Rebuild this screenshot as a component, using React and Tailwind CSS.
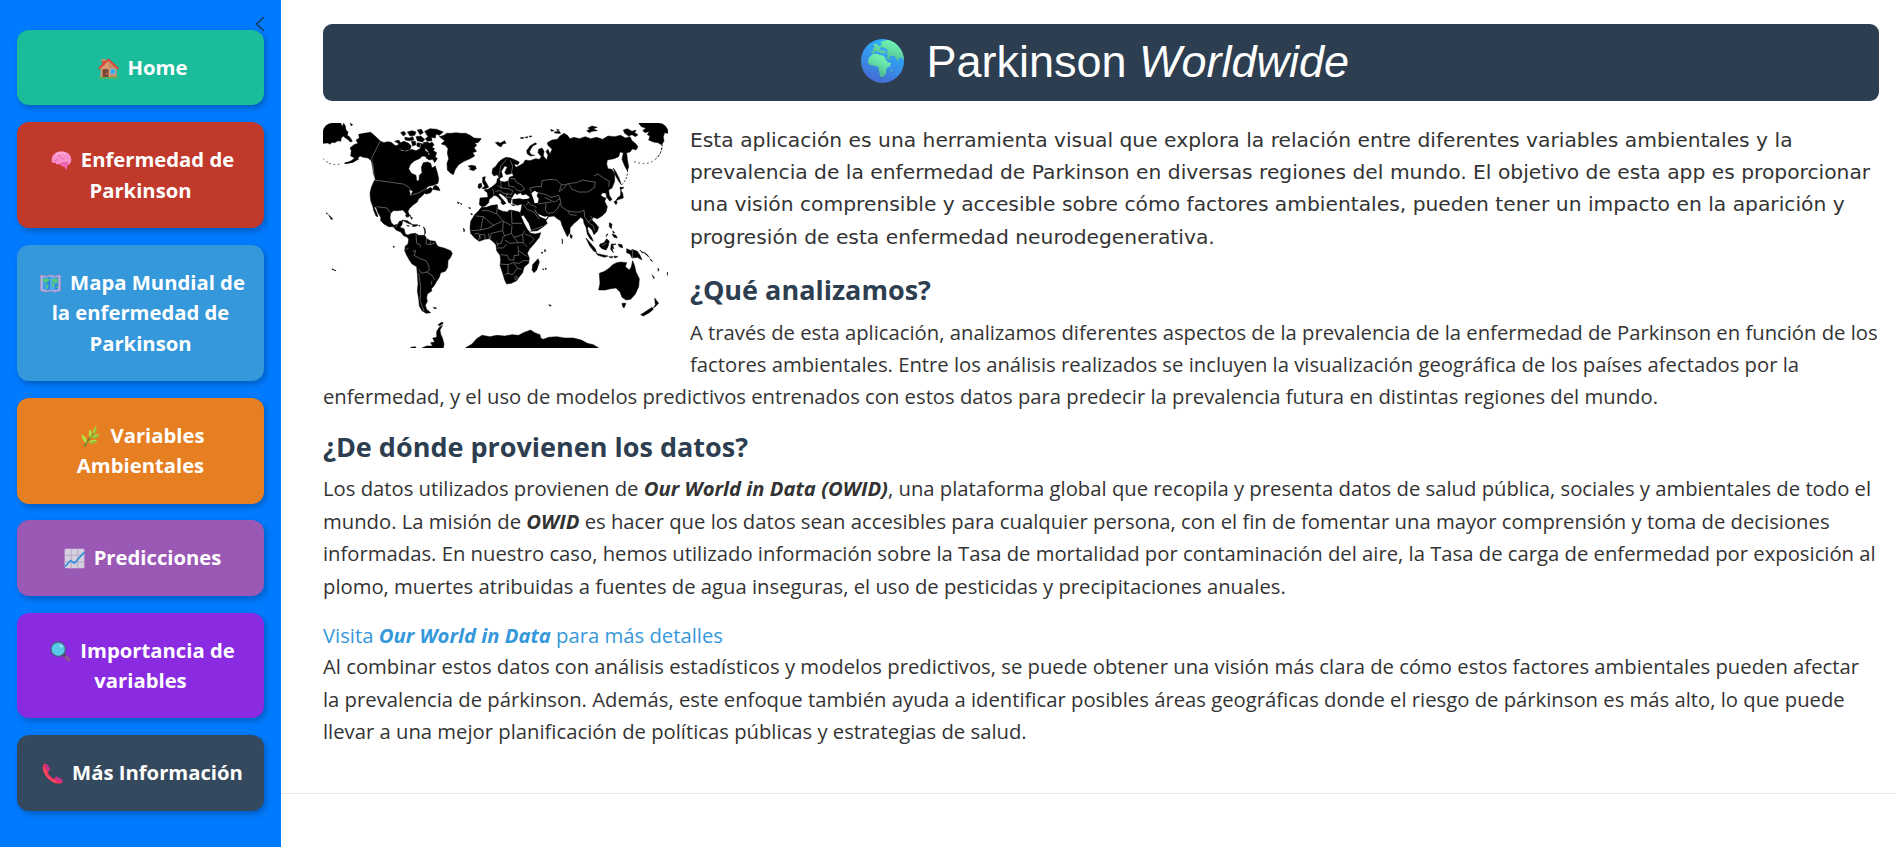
const LAND = [
  // Chukotka, left edge
  "M39 39 L92 39 L97 50 L101 40 L106 48 L108 60 L114 66 L112 76 L120 82 L127 94 L121 96 L113 88 L106 84 L100 78 L94 84 L92 94 L84 92 L74 98 L66 97 L60 103 L54 99 L39 100 Z",
  // Alaska and Canada
  "M146 73 L162 70 L182 67 L196 79 L211 93 L222 98 L232 95 L244 97 L252 104 L262 110 L274 122 L290 124 L304 118 L318 122 L330 116 L334 100 L342 104 L346 122 L356 128 L350 140 L338 138 L328 146 L314 152 L302 162 L296 176 L304 190 L318 196 L320 212 L327 212 L328 196 L336 188 L334 172 L340 158 L352 156 L362 160 L366 174 L376 168 L382 188 L386 206 L384 220 L370 226 L358 228 L348 234 L352 238 L362 232 L368 238 L362 248 L350 252 L344 250 L334 260 L326 266 L322 276 L308 286 L298 296 L294 304 L299 318 L293 322 L286 308 L278 300 L262 302 L250 302 L242 310 L240 324 L244 338 L252 346 L264 342 L268 334 L278 332 L276 344 L270 352 L282 356 L286 372 L296 376 L310 374 L318 378 L306 378 L294 382 L282 378 L272 366 L258 360 L250 350 L236 350 L222 342 L212 332 L212 322 L204 308 L198 292 L192 290 L200 308 L204 320 L198 318 L192 304 L188 288 L182 272 L180 250 L184 232 L192 214 L196 208 L190 190 L188 172 L184 152 L174 144 L160 142 L150 138 L140 148 L132 156 L120 158 L104 160 L124 152 L134 144 L122 138 L124 122 L120 114 L132 104 L144 100 L138 90 L148 84 Z",
  // Arctic archipelago
  "M254 94 L266 90 L272 98 L282 94 L296 100 L304 108 L300 118 L286 122 L270 118 L258 108 L268 102 Z",
  "M272 68 L282 64 L288 72 L280 78 Z M292 66 L306 62 L318 66 L314 76 L300 78 Z M322 60 L334 58 L340 68 L330 74 Z M344 64 L360 56 L380 58 L400 66 L388 76 L378 72 L376 84 L364 82 L366 92 L352 94 L346 86 L354 80 Z M284 82 L298 84 L308 80 L312 90 L298 92 L286 90 Z M318 80 L332 78 L344 88 L338 96 L322 92 Z M340 98 L350 96 L360 100 L366 96 L372 104 L366 112 L374 116 L370 122 L380 128 L376 140 L382 146 L374 158 L368 148 L358 150 L348 144 L352 134 L360 134 L354 122 L342 112 Z M304 94 L316 94 L318 104 L308 108 Z M322 98 L332 100 L328 112 L320 108 Z",
  "M378 226 L386 232 L390 242 L380 240 L368 238 L372 228 Z",
  // Greenland and Iceland
  "M388 80 L402 76 L410 70 L424 70 L438 68 L452 70 L468 70 L480 76 L492 84 L514 86 L504 98 L494 98 L500 106 L492 114 L500 124 L488 128 L494 138 L480 146 L462 154 L446 164 L436 178 L430 194 L422 190 L412 180 L411 160 L416 146 L412 130 L414 116 L406 106 L394 102 L404 92 Z",
  "M474 168 L484 166 L496 168 L499 176 L490 182 L478 178 L482 174 Z",
  // South America
  "M290 378 L300 372 L316 370 L326 376 L344 376 L350 386 L362 392 L376 394 L380 404 L386 410 L402 414 L422 422 L427 430 L422 442 L414 452 L413 472 L406 484 L392 488 L388 502 L380 514 L372 528 L364 536 L366 542 L352 552 L350 564 L352 574 L346 586 L350 598 L362 608 L348 610 L336 602 L328 588 L326 566 L322 544 L324 520 L322 492 L320 470 L306 462 L298 450 L290 436 L284 422 L286 408 L294 402 L296 388 Z",
  // British Isles
  "M518 202 L526 200 L524 210 L530 220 L536 232 L526 236 L516 236 L524 228 L518 218 Z M506 222 L514 220 L516 230 L508 236 L504 232 Z",
  // Europe and Asia
  "M546 190 L548 176 L558 168 L566 156 L576 148 L588 142 L602 144 L616 150 L628 156 L624 164 L612 162 L618 172 L630 166 L640 160 L646 150 L660 152 L676 146 L688 148 L694 140 L684 128 L686 118 L696 114 L702 124 L700 138 L710 150 L714 136 L708 124 L714 118 L720 132 L726 118 L714 106 L712 98 L726 90 L742 88 L750 78 L762 70 L772 76 L780 86 L792 82 L808 86 L826 80 L842 86 L860 82 L878 88 L894 78 L914 80 L932 76 L946 84 L960 80 L966 92 L976 100 L984 110 L978 120 L968 116 L960 126 L950 128 L952 148 L956 170 L952 182 L944 168 L936 148 L940 128 L930 126 L926 140 L912 146 L892 150 L890 162 L894 176 L906 178 L914 192 L914 214 L906 234 L896 240 L898 256 L906 268 L900 274 L890 262 L888 250 L878 248 L872 256 L880 262 L888 264 L884 274 L892 290 L888 306 L876 318 L862 326 L850 322 L846 330 L856 340 L866 352 L862 364 L852 374 L846 360 L836 350 L832 354 L836 368 L846 384 L850 394 L840 386 L832 372 L828 352 L822 340 L820 328 L812 322 L804 330 L790 342 L780 354 L780 368 L772 380 L764 364 L756 346 L752 332 L742 326 L732 318 L716 320 L708 332 L712 340 L700 350 L682 362 L662 364 L652 344 L638 324 L630 310 L634 296 L636 282 L622 286 L608 280 L608 268 L626 266 L640 266 L656 266 L660 262 L648 252 L636 256 L632 248 L620 254 L616 248 L610 256 L604 266 L602 280 L596 278 L592 268 L582 258 L570 250 L566 254 L580 270 L588 280 L580 284 L572 270 L560 258 L552 256 L544 264 L538 266 L536 278 L526 288 L516 290 L508 284 L510 264 L534 262 L532 248 L522 240 L534 238 L544 232 L552 226 L560 218 L562 206 L568 204 L570 214 L584 216 L596 212 L598 202 L610 198 L608 190 L590 194 L584 188 L592 170 L584 168 L574 184 L578 200 L568 206 L562 194 L552 198 Z",
  // Africa
  "M514 292 L528 292 L546 286 L562 284 L564 298 L578 304 L592 306 L598 300 L612 302 L628 306 L634 320 L642 340 L652 358 L662 370 L676 372 L692 368 L688 382 L672 402 L658 418 L652 430 L658 444 L656 460 L642 472 L638 488 L628 500 L620 512 L604 520 L590 522 L584 510 L578 490 L570 466 L572 450 L570 436 L560 422 L558 404 L548 394 L538 386 L524 388 L508 394 L494 384 L482 370 L480 352 L482 334 L494 314 L506 302 Z",
  "M684 446 L688 456 L680 480 L672 488 L666 480 L668 464 Z",
  // Novaya Zemlya, Svalbard
  "M676 98 L680 102 L668 108 L662 118 L658 126 L664 134 L674 136 L662 138 L652 132 L650 122 L660 108 Z M556 98 L564 96 L570 100 L584 92 L588 100 L578 102 L574 110 L566 108 Z",
  "M630 84 L640 82 L640 86 Z M644 82 L654 80 L652 84 Z M658 78 L666 78 L660 82 Z M722 58 L732 62 L724 64 Z M732 66 L748 64 L752 70 L738 70 Z M740 58 L748 60 L742 62 Z M834 54 L846 48 L862 52 L850 56 L862 62 L846 64 L838 68 L830 62 L840 58 Z",
  // Kamchatka, Chukotka, right edge
  "M986 39 L1074 39 L1074 70 L1064 68 L1060 80 L1062 94 L1054 104 L1044 98 L1030 96 L1016 90 L1020 78 L1012 74 L1018 64 L1006 68 L998 62 L1008 54 L994 50 Z M940 60 L952 56 L966 64 L978 60 L974 68 L984 74 L976 80 L966 74 L956 78 L944 70 Z",
  // Japan, Sakhalin
  "M910 174 L918 186 L928 206 L934 224 L926 214 L916 196 Z M930 232 L942 232 L936 238 L930 238 Z M932 240 L938 250 L940 264 L928 268 L918 272 L922 264 L932 256 Z M916 272 L922 276 L918 284 L912 276 Z",
  // South-east Asia
  "M828 384 L842 400 L856 416 L860 428 L850 422 L838 406 Z M858 430 L876 434 L894 438 L884 442 L864 436 Z M870 402 L882 398 L890 386 L898 394 L894 410 L888 420 L876 416 L868 408 Z M904 402 L918 402 L908 406 L912 416 L906 414 L910 428 L902 418 Z M898 338 L906 342 L904 356 L898 350 Z M906 372 L918 376 L922 384 L912 382 Z M950 416 L964 422 L966 418 L982 424 L990 436 L996 450 L982 442 L966 444 L960 432 L950 428 Z M782 372 L787 378 L784 386 L780 380 Z M924 402 L936 404 L938 414 L928 410 Z M896 440 L910 440 L904 444 Z M912 438 L924 440 L914 444 Z",
  // Australia, New Zealand
  "M866 540 L870 520 L868 490 L884 484 L898 474 L908 464 L920 458 L932 456 L950 458 L946 470 L958 480 L964 470 L968 452 L974 468 L978 486 L988 506 L986 530 L976 552 L962 568 L948 570 L936 562 L930 546 L918 534 L902 536 L886 540 Z M936 580 L948 580 L942 594 L938 590 Z M1034 564 L1040 572 L1046 580 L1038 588 L1030 594 L1036 584 Z M1026 592 L1030 598 L1018 608 L1000 618 L992 614 L1008 604 Z",
  // Antarctica
  "M466 714 L486 702 L500 686 L516 676 L540 680 L560 676 L584 678 L606 674 L626 676 L640 668 L662 660 L674 668 L690 674 L692 684 L700 688 L716 682 L740 680 L764 684 L790 684 L814 690 L832 700 L850 704 L866 714 Z",
  "M336 714 L350 708 L368 708 L362 698 L374 696 L368 684 L380 682 L380 664 L388 652 L398 646 L390 660 L392 672 L398 686 L402 702 L400 714 Z M302 712 L316 710 L318 714 L304 714 Z M384 644 L396 636 L400 640 L388 648 Z",
  // Small islands
  "M48 308 l5 3 l-2 2z M56 314 l6 6 l-3 1z M62 320 l6 6 l-2 3 l-5 -4z M66 476 l6 3 l-4 1z M72 480 l6 1 l-2 2z M250 408 l4 2 l-3 3z M276 330 L292 332 L308 344 L294 340 Z M308 344 L324 344 L320 348 L308 350 Z M286 316 l6 0 l-2 6z M300 314 l3 8 l5 2 l-4 4z M290 346 l8 2 l-4 1z M326 346 l5 1 l-4 2z M340 350 l5 6 l2 12 l-3 6 l0 -12z M370 592 l10 2 l-6 3z M442 276 l6 2 l-4 3z M450 280 l6 2 l-3 1z M476 292 l6 2 l-3 3z M482 310 l6 3 l-3 2z M460 354 l4 6 l-2 6z M704 418 l4 4 l-4 4z M694 426 l5 2 l-3 3z M706 474 l4 2 l-4 3z M698 476 l4 2 l-3 2z M756 386 l2 6 l-1 10z M716 584 l8 2 l-4 3z M120 40 l8 4 l-4 4z M572 276 l10 2 l-4 6z M604 284 l12 1 l-6 2z M990 420 l10 8 l-3 1z M1000 426 l10 6 l8 10 l-9 -7z M1020 446 l8 8 l-4 -1z M1044 474 l3 6 l-3 4z M1072 486 l2 8 l-2 2z M1026 494 l8 10 l-3 1z M908 362 l6 6 l-4 2z M894 372 l-6 8 l3 -8z",
];

const BORDERS =
  "M211 93 L184 146 L188 152 M188 156 L194 210 L280 222 L296 232 L304 242 L300 256 L328 248 L344 238 L354 236 M200 290 L232 294 L240 308 M256 352 L262 344 M272 352 L280 356 M318 374 L320 400 L330 404 L332 412 M286 420 L296 414 M308 424 L318 422 L312 436 L330 446 L348 452 L356 466 L358 480 L350 486 L334 490 L326 478 M350 486 L366 496 L374 510 M366 512 L364 524 M326 490 L332 530 L330 570 L342 604 M350 386 L348 402 L362 404 L376 398 M560 396 L564 408 M362 394 L360 404" +
  " M604 304 L606 340 L636 340 M562 290 L560 310 L580 334 L604 346 M516 302 L534 302 L560 312 M498 318 L520 320 L550 346 L576 334 M520 320 L512 360 L484 362 M512 360 L536 354 L552 346 M580 334 L578 362 L544 370 L540 388 M606 346 L604 370 L584 378 L578 362 M580 378 L574 400 L562 402 M604 370 L612 382 L638 374 L644 362 M612 382 L624 398 L640 398 L638 374 M584 390 L600 400 L624 398 M562 414 L580 414 L590 402 M572 434 L592 436 L598 450 L612 450 L612 436 L626 436 L624 408 M640 400 L652 410 M626 422 L652 440 M570 462 L594 464 L610 458 L628 460 L640 452 L656 452 M594 464 L594 490 L584 494 M612 460 L622 474 L634 478 M594 490 L608 494 L622 476 M644 372 L662 378 L672 388 L658 402 M494 372 L506 370 L512 386 M506 390 L510 374 L524 374 L526 388 M536 370 L538 388 M614 502 L620 498 L622 506 L616 510 Z" +
  " M566 204 L572 168 L590 148 M604 192 L608 168 L600 150 M600 206 L614 206 L618 216 L636 226 L644 238 L632 244 L620 240 L612 230 L596 228 L596 214 M572 216 L574 234 L596 236 L608 242 L604 254 L582 250 L570 242 L556 244 M574 234 L562 226 M548 236 L552 254 M592 250 L588 262 L604 262 M664 246 L660 234 L678 230 L694 230 L696 212 L722 208 L740 210 L754 224 L766 224 L778 220 L800 218 L818 210 L840 214 L856 216 L854 232 L834 246 L806 246 L786 238 L776 222 M852 198 L864 192 L880 204 L898 214 L896 230 M754 224 L748 244 L760 236 L770 224 M684 248 L708 254 L724 262 L746 256 L750 266 L734 276 L724 272 L704 262 M684 282 L708 278 L724 276 M708 280 L706 300 L714 310 L730 308 L744 294 L750 280 M750 266 L754 290 L772 302 L794 306 L812 306 L822 300 L824 320 L834 336 M774 304 L780 314 L800 316 M834 336 L848 326 L842 318 M834 336 L850 348 L854 362 M640 284 L652 298 L672 306 L688 328 M652 272 L662 284 L680 292 M648 286 L658 276 M662 362 L684 354 L700 348 M968 418 L968 444 M876 406 L890 400";

// Lakes, seas and inlets that cut into the land
const WATER =
  "M664 250 L674 242 L684 248 L680 258 L686 266 L684 278 L674 280 L670 266 Z M612 252 L622 256 L634 254 L646 258 L654 266 L638 268 L624 262 L612 266 Z M634 320 L640 316 L656 340 L664 362 L660 362 Z M672 296 L684 312 L704 320 L714 318 L708 328 L690 320 L676 304 Z M298 240 L308 244 L302 254 Z M620 296 L628 294 L632 302 Z";

const ISLAND_CHAINS = "M58 160 Q76 168 96 160 M39 146 Q46 154 56 158 M1038 146 Q1012 172 966 152";

function WorldMap() {
  return (
    <svg className="float-left mr-[22px] mb-[16px] h-[225px] w-[345px] rounded-[9px]" viewBox="39 39 1035 675" preserveAspectRatio="none">
      <rect x="39" y="39" width="1035" height="675" fill="#fff" />
      {LAND.map((d, i) => (
        <path key={i} d={d} fill="#000" stroke="#000" strokeWidth="1.5" strokeLinejoin="round" />
      ))}
      <path d={WATER} fill="#fff" />
      <path d={BORDERS} fill="none" stroke="#a8a8a8" strokeWidth="1.6" />
      <path d={ISLAND_CHAINS} fill="none" stroke="#000" strokeWidth="2.2" strokeDasharray="5 8" />
      <path d="M104 160 Q128 158 146 146" fill="none" stroke="#000" strokeWidth="3.5" />
      <path d="M1056 100 Q1058 128 1038 146" fill="none" stroke="#000" strokeWidth="3" strokeDasharray="8 4" />
      <path d="M952 180 Q956 200 936 224" fill="none" stroke="#000" strokeWidth="2.5" strokeDasharray="6 5" />
    </svg>
  );
}

const ICON = "mr-[9px] ml-[4px] inline-block h-[21px] w-[21px] align-[-4px]";

function HouseIcon() {
  return (
    <svg className={ICON} viewBox="0 0 32 32">
      <path d="M6 3h5v8H6z" fill="#b5553f" />
      <path d="M5 2h7v3H5z" fill="#d98b63" />
      <path d="M4 15 16 4l12 11v15H4z" fill="#d99a70" />
      <path d="M16 5 28 16v14h-9z" fill="#c98a68" />
      <path d="M7 17h9v13H7z" fill="#7d4437" />
      <circle cx="13.5" cy="24" r="1" fill="#e8b36a" />
      <path d="M19 17h7v7h-7z" fill="#2fa5ef" stroke="#8cc8ee" strokeWidth="1" />
      <path d="m1 16.500 15-14 15 14" fill="none" stroke="#e0443a" strokeWidth="3" strokeLinejoin="round" />
      <path d="M1 29h30v3H1z" fill="#4bb55f" />
    </svg>
  );
}

function BrainIcon() {
  return (
    <svg className={ICON} viewBox="0 0 32 32">
      <path d="M1 16C1 7 8 2 16 2c9 0 15 6 15 13 0 5-3 8-6 8l-1 7-4-5c-4 0-6-2-6-4-3 2-7 1-7-2-4 2-6 0-6-3z" fill="#f98fcb" />
      <path d="M14 21c4-3 9-1 14-3l-3 5-1 7-4-5c-4 0-6-2-6-4z" fill="#f064b2" />
      <path d="M4 17c3 0 4-3 7-2m0-7c5 1 4 6 9 6m-6 7c3-3 7 0 10-2" fill="none" stroke="#dd62aa" strokeWidth="1.300" strokeLinecap="round" />
      <path d="M7 8c4-4 11-5 15-2" fill="none" stroke="#ffb5dc" strokeWidth="2" />
    </svg>
  );
}

function FoldedMapIcon() {
  return (
    <svg className={ICON} viewBox="0 0 32 32">
      <path d="m1 3 9 2 6-2 6 2 9-2v24l-9 2-6-2-6 2-9-2z" fill="#c3b7df" stroke="#a08fc5" strokeWidth="1.500" />
      <path d="m4 6 6 1v19l-6-1z" fill="#3e9de9" />
      <path d="m10 7 6-2v20l-6 2z" fill="#2d87dc" />
      <path d="m16 5 6 2v20l-6-2z" fill="#43abef" />
      <path d="m22 7 6-1v19l-6 1z" fill="#2f8ce0" />
      <path d="m4 9 8-1 3 2-4 4-3 2-2-3-2-1zM9 17l4 2-2 6-2-3zM18 9l9-1v6l-3 3-2-3-4 1zM18 15l4 2-1 6-3-4zM25 20l3 0v3l-3 0z" fill="#53c77c" />
    </svg>
  );
}

function HerbIcon() {
  return (
    <svg className={ICON} viewBox="0 0 32 32">
      <path d="M7 31C10 24 16 17 22 10" fill="none" stroke="#62873b" strokeWidth="2.200" strokeLinecap="round" />
      <path d="M24 0c2 5 1 10-3 13-2-5 0-10 3-13zM15 5c4 4 4 8 1 13-4-4-3-9-1-13zM3 13c5 2 8 7 7 13-5-2-8-7-7-13zM29 12c-1 6-6 8-12 6 3-4 7-6 12-6zM26 22c-3 5-8 6-13 3 3-4 8-5 13-3z" fill="#b5dc40" />
      <path d="M24 0c2 5 1 10-3 13l3-13zM29 12c-1 6-6 8-12 6zM26 22c-3 5-8 6-13 3z" fill="#8fbf38" />
    </svg>
  );
}

function ChartIcon() {
  return (
    <svg className={ICON} viewBox="0 0 32 32">
      <rect x="1" y="1" width="30" height="30" rx="2" fill="#d6cfe0" />
      <path d="M11 1v30M21 1v30M1 11h30M1 21h30" stroke="#b5abc4" strokeWidth="1.500" />
      <path d="m1 29 9-10 6 4L31 6" fill="none" stroke="#2d8fd8" strokeWidth="2.500" />
    </svg>
  );
}

function MagnifierIcon() {
  return (
    <svg className={ICON} viewBox="0 0 32 32">
      <path d="m22 22 6.500 6.500" stroke="#8a5590" strokeWidth="5.500" strokeLinecap="round" />
      <path d="m19 19 4 4" stroke="#46455d" strokeWidth="4" />
      <circle cx="12.500" cy="12.500" r="11" fill="#59c9ea" stroke="#47637f" strokeWidth="2" />
      <path d="M15 5c2 1 4 2 4 5l-3-1z" fill="#b9effb" />
    </svg>
  );
}

function PhoneIcon() {
  return (
    <svg className={ICON} viewBox="0 0 32 32">
      <path d="M2 3c2-3 6-2 8 2l2 5c0 2-3 3-3 4 1 4 5 8 9 10 2 0 2-3 4-3l6 3c4 2 4 5 2 7-6 2-13-1-19-6C4 19-1 9 2 3z" fill="#ee3358" />
      <path d="m6 1 6 7-2 5-5-7zM22 20l9 5-2 5-9-6z" fill="#c0328e" />
      <path d="M3 7c0 8 8 19 18 22" fill="none" stroke="#ff5268" strokeWidth="2" />
    </svg>
  );
}

function GlobeIcon() {
  return (
    <svg className="-mt-px h-[44px] w-[43px]" viewBox="0 0 128 132" preserveAspectRatio="none">
      <defs>
        <linearGradient id="sea" x1="0.700" y1="0" x2="0.300" y2="1">
          <stop offset="0" stopColor="#2fb4fb" />
          <stop offset="0.500" stopColor="#3494ec" />
          <stop offset="1" stopColor="#4668cf" />
        </linearGradient>
        <linearGradient id="land" x1="0.800" y1="0" x2="0.300" y2="1">
          <stop offset="0" stopColor="#79ffb4" />
          <stop offset="0.500" stopColor="#62dca5" />
          <stop offset="1" stopColor="#4aa88b" />
        </linearGradient>
        <clipPath id="disc"><ellipse cx="64" cy="66" rx="64" ry="66" /></clipPath>
      </defs>
      <g clipPath="url(#disc)">
        <rect width="128" height="132" fill="url(#sea)" />
        <path d="M80 2 L66 6 L58 10 L62 18 L54 22 L46 14 L36 16 L42 24 L34 28 L40 34 L30 38 L32 44 L40 42 L46 36 L54 40 L62 44 L74 42 L72 34 L60 34 L56 28 L62 24 L72 28 L80 34 L76 44 L82 52 L74 54 L78 60 L88 64 L86 52 L92 52 L100 50 L104 60 L110 66 L114 56 L122 56 L130 66 L130 0 Z" fill="url(#land)" />
        <path d="M34 46 L50 44 L54 48 L68 50 L74 62 L80 70 L90 72 L86 82 L76 88 L74 104 L66 114 L58 114 L54 98 L52 84 L40 80 L26 78 L20 68 L24 56 Z" fill="url(#land)" />
        <path d="M89 92 l4 -2 v6 l-4 4z" fill="#4fb897" />
      </g>
    </svg>
  );
}

const NAV = [
  { label: "Home", icon: HouseIcon, color: "bg-[#1abc9c]" },
  { label: "Enfermedad de Parkinson", icon: BrainIcon, color: "bg-[#c0392b]" },
  { label: "Mapa Mundial de la enfermedad de Parkinson", icon: FoldedMapIcon, color: "bg-[#3498db]" },
  { label: "Variables Ambientales", icon: HerbIcon, color: "bg-[#e67e22]" },
  { label: "Predicciones", icon: ChartIcon, color: "bg-[#9b59b6]" },
  { label: "Importancia de variables", icon: MagnifierIcon, color: "bg-[#8a2be2]" },
  { label: "Más Información", icon: PhoneIcon, color: "bg-[#34495e]" },
];

function Sidebar() {
  return (
    <aside className="relative flex w-[281px] shrink-0 flex-col gap-[16.800px] bg-[#007bff] px-[17px] pt-[30px]">
      {NAV.map(({ label, icon: Icon, color }) => (
        <a
          key={label}
          className={`block rounded-[12px] px-[17px] pt-[22.100px] pb-[22.900px] text-center text-[20.250px] leading-[30.400px] font-bold text-white shadow-[2px_3px_6px_rgba(0,0,0,0.25)] ${color}`}
        >
          <Icon />
          {label}
        </a>
      ))}
      <svg className="absolute top-[16px] left-[255px] h-[16px] w-[10px]" viewBox="0 0 10 16" fill="none" stroke="#1c3550" strokeWidth="1.300">
        <path d="M9 1 1.500 8 9 15" />
      </svg>
    </aside>
  );
}

export default function App() {
  return (
    <div className="flex h-[847px] overflow-hidden bg-white font-['Open_Sans','Noto_Sans',sans-serif] text-[#333]">
      <Sidebar />
      <main className="min-w-0 grow">
        <div className="h-[794px] border-b border-[#e7e9eb] pt-[24px] pr-[17px] pl-[42px]">
          <header className="mb-[22px] flex h-[77px] items-center justify-center rounded-[9px] bg-[#2c3e50] pb-[2px] pl-[8px] font-['Liberation_Sans',Arial,sans-serif] text-[45px] text-white">
            <GlobeIcon />
            <h1 className="ml-[22.500px] whitespace-pre">Parkinson <em>Worldwide</em></h1>
          </header>
          <div className="text-[20.250px] leading-[32.400px]">
            <WorldMap />
            <p className="pt-[0.500px] font-['DejaVu_Sans',Verdana,sans-serif]">
              Esta aplicación es una herramienta visual que explora la relación entre diferentes variables ambientales y la prevalencia de la enfermedad de Parkinson en diversas regiones del mundo. El objetivo de esta app es proporcionar una visión comprensible y accesible sobre cómo factores ambientales, pueden tener un impacto en la aparición y progresión de esta enfermedad neurodegenerativa.
            </p>
            <h2 className="mt-[18.500px] mb-[8px] text-[27px] leading-[36px] font-bold text-[#2c3e50]">¿Qué analizamos?</h2>
            <p>
              A través de esta aplicación, analizamos diferentes aspectos de la prevalencia de la enfermedad de Parkinson en función de los factores ambientales. Entre los análisis realizados se incluyen la visualización geográfica de los países afectados por la enfermedad, y el uso de modelos predictivos entrenados con estos datos para predecir la prevalencia futura en distintas regiones del mundo.
            </p>
            <h2 className="mt-[16px] mb-[7.500px] text-[27px] leading-[36px] font-bold text-[#2c3e50]">¿De dónde provienen los datos?</h2>
            <p>
              Los datos utilizados provienen de <strong><em>Our World in Data (OWID)</em></strong>, una plataforma global que recopila y presenta datos de salud pública, sociales y ambientales de todo el mundo. La misión de <strong><em>OWID</em></strong> es hacer que los datos sean accesibles para cualquier persona, con el fin de fomentar una mayor comprensión y toma de decisiones informadas. En nuestro caso, hemos utilizado información sobre la Tasa de mortalidad por contaminación del aire, la Tasa de carga de enfermedad por exposición al plomo, muertes atribuidas a fuentes de agua inseguras, el uso de pesticidas y precipitaciones anuales.
            </p>
            <a className="mt-[18.500px] -mb-px block leading-[31px] text-[#3498db]">
              Visita <strong><em>Our World in Data</em></strong> para más detalles
            </a>
            <p>
              Al combinar estos datos con análisis estadísticos y modelos predictivos, se puede obtener una visión más clara de cómo estos factores ambientales pueden afectar la prevalencia de párkinson. Además, este enfoque también ayuda a identificar posibles áreas geográficas donde el riesgo de párkinson es más alto, lo que puede llevar a una mejor planificación de políticas públicas y estrategias de salud.
            </p>
          </div>
        </div>
      </main>
    </div>
  );
}
